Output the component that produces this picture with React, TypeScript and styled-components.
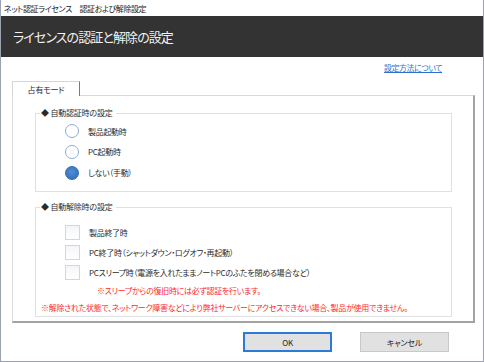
import React from 'react';
import styled, { createGlobalStyle } from 'styled-components';

const GlobalStyle = createGlobalStyle`
	html, body {
		margin: 0;
		padding: 0;
		background: #ffffff;
	}
	body {
		font-family: "Noto Sans CJK JP", "Noto Sans", sans-serif;
		font-feature-settings: "palt";
		color: #2b2b2b;
	}
`;

const Window = styled.div`
	width: 484px;
	height: 362px;
	box-sizing: border-box;
	border: 1px solid #9ba3ae;
	border-top: none;
	background: #ffffff;
	display: flex;
	flex-direction: column;
`;

const TitleBar = styled.div`
	height: 16px;
	padding-left: 3px;
	display: flex;
	align-items: center;
	font-size: 8px;
	color: #222;
	letter-spacing: -0.4px;
`;

const Header = styled.div`
	height: 41px;
	background: #333333;
	padding-left: 12px;
	display: flex;
	align-items: center;
	font-size: 13px;
	color: #f2f2f2;
	letter-spacing: -0.9px;
`;

const LinkRow = styled.div`
	height: 20px;
	display: flex;
	justify-content: flex-end;
	align-items: center;
	padding-right: 41px;
`;

const HelpLink = styled.a`
	font-size: 8px;
	letter-spacing: -0.5px;
	color: #2f6fd0;
	text-decoration: underline;
	cursor: pointer;
`;

const Tabs = styled.div`
	margin: 4px 0 0 11px;
	display: flex;
`;

const Tab = styled.div`
	width: 68px;
	height: 15px;
	box-sizing: border-box;
	border: 1px solid #d6d6d6;
	border-right: 1px solid #7a7a7a;
	border-bottom: none;
	background: #ffffff;
	display: flex;
	align-items: center;
	justify-content: center;
	font-size: 8px;
	letter-spacing: -0.2px;
	margin-bottom: -1px;
	position: relative;
	z-index: 1;
`;

const Panel = styled.div`
	margin-left: 11px;
	width: 463px;
	height: 228px;
	box-sizing: border-box;
	border: 1px solid #d9d9d9;
	border-right: 2px solid #a3a3a3;
	border-bottom: 2px solid #a3a3a3;
	padding-top: 11px;
	display: flex;
	flex-direction: column;
	gap: 9px;
`;

const Group = styled.fieldset`
	margin: 0 0 0 22px;
	width: 417px;
	box-sizing: border-box;
	border: 1px solid #e0e0e0;
	padding: 0;
	min-inline-size: 0;
`;

const Legend = styled.legend`
	padding: 0 3px 0 1px;
	margin-left: 4px;
	font-size: 8px;
	letter-spacing: -0.2px;
	line-height: 12px;
`;

const Options = styled.div<{ $pad: string }>`
	display: flex;
	flex-direction: column;
	padding: ${(p) => p.$pad};
`;

const Option = styled.label<{ $h: number }>`
	height: ${(p) => p.$h}px;
	display: flex;
	align-items: center;
	gap: 9px;
	font-size: 8px;
	letter-spacing: -0.3px;
`;

const Radio = styled.span<{ $on?: boolean }>`
	width: 14px;
	height: 14px;
	box-sizing: border-box;
	border-radius: 50%;
	border: 1px solid ${(p) => (p.$on ? '#2f6db5' : '#8eaad6')};
	background: ${(p) =>
		p.$on ? 'radial-gradient(circle at 45% 40%, #4f8fd6, #2d69b3)' : '#ffffff'};
`;

const Check = styled.span`
	width: 15px;
	height: 15px;
	box-sizing: border-box;
	border: 1px solid #d3d6de;
	background: linear-gradient(180deg, #f4f5f8, #ffffff);
`;

const RedNote = styled.div<{ $indent: number; $h: number }>`
	color: #ff2a2a;
	font-size: 8px;
	letter-spacing: -0.3px;
	height: ${(p) => p.$h}px;
	display: flex;
	align-items: center;
	padding-left: ${(p) => p.$indent}px;
`;

const Buttons = styled.div`
	display: flex;
	justify-content: flex-end;
	gap: 28px;
	padding: 9px 34px 0 0;
`;

const Button = styled.button<{ $primary?: boolean }>`
	width: 89px;
	height: 20px;
	box-sizing: border-box;
	background: #e1e1e1;
	border: ${(p) => (p.$primary ? '2px solid #2b7bd6' : '1px solid #c8c8c8')};
	font-family: inherit;
	font-feature-settings: "palt";
	font-size: 8px;
	letter-spacing: -0.2px;
	color: #222;
	padding: 0;
	cursor: pointer;
`;

export default function App() {
	return (
		<>
			<GlobalStyle />
			<Window>
				<TitleBar>ネット認証ライセンス　認証および解除設定</TitleBar>
				<Header>ライセンスの認証と解除の設定</Header>
				<LinkRow>
					<HelpLink>設定方法について</HelpLink>
				</LinkRow>
				<Tabs>
					<Tab>占有モード</Tab>
				</Tabs>
				<Panel>
					<Group>
						<Legend>◆ 自動認証時の設定</Legend>
						<Options $pad="2px 0 8px 29px">
							<Option $h={20}>
								<Radio />
								製品起動時
							</Option>
							<Option $h={21}>
								<Radio />
								PC起動時
							</Option>
							<Option $h={21}>
								<Radio $on />
								しない（手動）
							</Option>
						</Options>
					</Group>
					<Group>
						<Legend>◆ 自動解除時の設定</Legend>
						<Options $pad="9px 0 0 29px">
							<Option $h={20}>
								<Check />
								製品終了時
							</Option>
							<Option $h={20}>
								<Check />
								PC終了時（シャットダウン・ログオフ・再起動）
							</Option>
							<Option $h={20}>
								<Check />
								PCスリープ時（電源を入れたままノートPCのふたを閉める場合など）
							</Option>
						</Options>
						<RedNote $indent={61} $h={16}>
							※スリープからの復旧時には必ず認証を行います。
						</RedNote>
						<RedNote $indent={5} $h={18}>
							※解除された状態で、ネットワーク障害などにより弊社サーバーにアクセスできない場合、製品が使用できません。
						</RedNote>
					</Group>
				</Panel>
				<Buttons>
					<Button $primary>OK</Button>
					<Button>キャンセル</Button>
				</Buttons>
			</Window>
		</>
	);
}
